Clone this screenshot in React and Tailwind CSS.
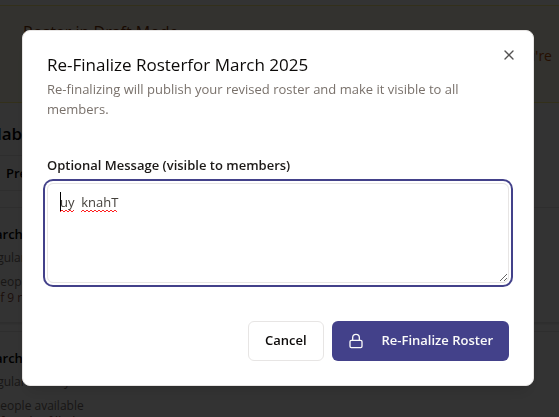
import { Lock, X } from "lucide-react";

const ministries = [
  { title: "March 2", kind: "Regular Sunday", people: "3 people available", note: "8 of 9 roles filled" },
  { title: "March 9", kind: "Regular Sunday", people: "3 people available", note: "7 of 9 roles filled" },
];

function RosterCard({ title, kind, people, note }) {
  return (
    <article className="h-[116px] overflow-hidden rounded-lg border border-stone-200 bg-white pt-4 shadow-sm">
      <h3 className="text-[13px] leading-5 font-semibold text-black">{title}</h3>
      <p className="mt-1 text-xs leading-5 text-stone-500">{kind}</p>
      <p className="mt-1 text-xs leading-5 text-stone-500">{people}</p>
      <p className="text-xs leading-3 text-[#8a4a38]">{note}</p>
    </article>
  );
}

function RosterPage() {
  return (
    <div aria-hidden="true" className="h-screen overflow-hidden bg-white pt-[5px]">
      <section className="-mx-2 h-[98px] border border-yellow-200 bg-[#fffbeb] pt-4 pr-[14px] pl-[30px]">
        <h2 className="text-base leading-5 font-medium text-amber-900">Roster in Draft Mode</h2>
        <p className="mt-1 text-right text-sm leading-5 text-amber-700">Changes are not visible to members while you're</p>
      </section>
      <h2 className="-ml-[38px] pt-[17px] text-[17px] leading-7 font-semibold text-black">Availability</h2>
      <nav className="mt-[7px] mr-[26px] border-y border-stone-200 px-[6px] py-[7px] text-[13px] leading-5 font-semibold text-black">Previous</nav>
      <div className="mt-4 -mr-2 -ml-[18px] flex flex-col gap-2">
        {ministries.map((item) => (
          <RosterCard key={item.title} {...item} />
        ))}
      </div>
    </div>
  );
}

export default function App() {
  return (
    <div className="font-['Open_Sans','Noto_Sans',sans-serif]">
      <RosterPage />
      <div className="fixed inset-0 flex items-center justify-center bg-black/80 pr-[3px] pb-px">
        <div
          role="dialog"
          aria-modal="true"
          aria-labelledby="dialog-title"
          aria-describedby="dialog-description"
          className="relative w-full max-w-lg rounded-lg border border-stone-200 bg-white p-6 shadow-lg"
        >
          <h1 id="dialog-title" className="text-[17px] leading-5 font-medium text-stone-950">
            Re-Finalize Rosterfor March 2025
          </h1>
          <p id="dialog-description" className="mt-1 text-[13px] leading-5 text-stone-500">
            Re-finalizing will publish your revised roster and make it visible to all members.
          </p>
          <label htmlFor="message" className="mt-9 block text-[13px] leading-5 font-semibold text-stone-900">
            Optional Message (visible to members)
          </label>
          <div className="relative mt-2">
            <textarea
              id="message"
              spellCheck="false"
              defaultValue="uy  knahT"
              className="block h-[100px] w-full resize-y rounded-md border border-stone-200 bg-white px-3 py-2 text-[13px] leading-5 text-stone-700 ring-2 ring-[#43418a] ring-offset-2 outline-none"
            />
            <div aria-hidden="true" className="pointer-events-none absolute top-[9px] left-[13px] flex h-5 items-end">
              <span className="h-full w-px bg-black" />
            </div>
            <svg aria-hidden="true" className="pointer-events-none absolute top-[26px] left-[13px]" width="64" height="4" fill="none" stroke="#ff2020">
              <path d="M0 3L2 1L4 3L6 1L8 3L10 1L12 3L14 1" />
              <path d="M21 3L23 1L25 3L27 1L29 3L31 1L33 3L35 1L37 3L39 1L41 3L43 1L45 3L47 1L49 3L51 1L53 3L55 1L57 3" />
            </svg>
          </div>
          <div className="mt-[38px] flex justify-end gap-2">
            <button type="button" className="h-10 rounded-md border border-stone-200 bg-white px-4 text-[13px] font-semibold text-stone-950">
              Cancel
            </button>
            <button type="button" className="flex h-10 items-center gap-[18px] rounded-md bg-[#43418a] px-4 text-[13px] font-semibold text-stone-50">
              <Lock size={16} strokeWidth={2} aria-hidden="true" />
              Re-Finalize Roster
            </button>
          </div>
          <button type="button" aria-label="Close" className="absolute top-4 right-4 text-stone-950 opacity-70">
            <X size={16} strokeWidth={2} />
          </button>
        </div>
      </div>
    </div>
  );
}
